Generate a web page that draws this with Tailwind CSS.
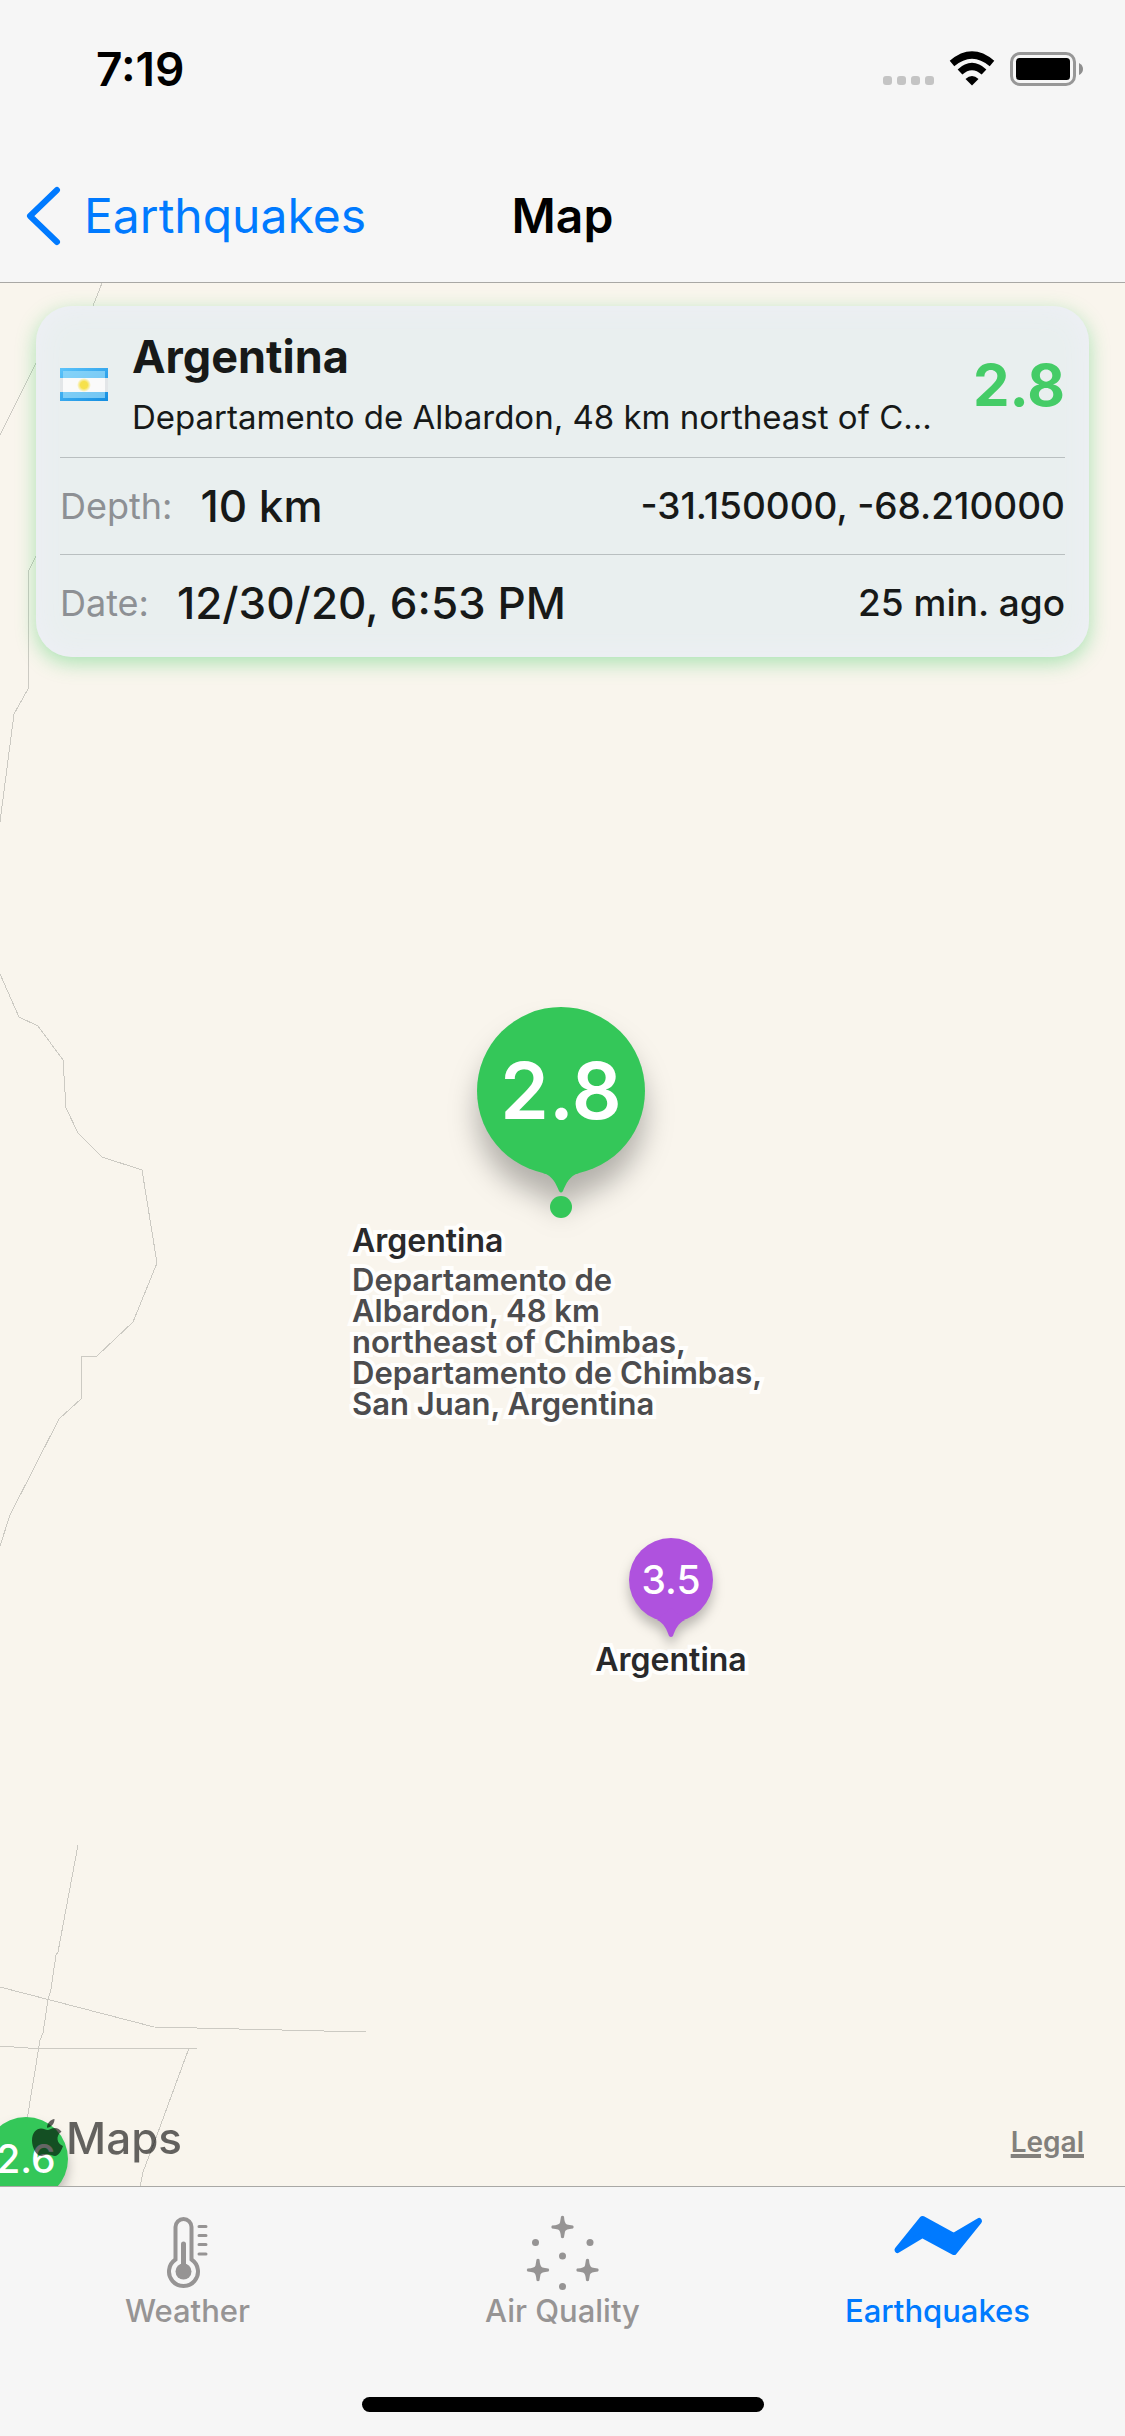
<!DOCTYPE html>
<html lang="en">
<head>
<meta charset="utf-8">
<meta name="viewport" content="width=device-width, initial-scale=1">
<title>Map</title>
<script src="https://cdn.jsdelivr.net/npm/@tailwindcss/browser@4"></script>
</head>
<body class="flex min-h-screen flex-col bg-[#f6f6f6] font-[Inter,sans-serif] text-black">

<header class="border-b border-[#a9a8a5]">
  <div class="flex h-[138px] items-center justify-between pr-[42px] pl-24">
    <time class="text-[46px] font-semibold leading-[52px]">7:19</time>
    <svg class="h-9 w-[202px]" viewBox="0 0 202 36" aria-hidden="true">
      <g fill="#c4c4c4"><rect x="2" y="25" width="9" height="9" rx="3"/><rect x="16" y="25" width="9" height="9" rx="3"/><rect x="30" y="25" width="9" height="9" rx="3"/><rect x="44" y="25" width="9" height="9" rx="3"/></g>
      <g fill="none" stroke="#000" stroke-width="7"><path d="M71 12.5Q91 -4.500 111 12.500"/><path d="M79 21Q91 10 103 21"/></g>
      <path d="M91 34.500L84.500 28Q91 22 97.500 28Z"/>
      <rect x="130.500" y="2.500" width="63" height="31" rx="8.500" fill="none" stroke="#979797" stroke-width="3"/>
      <rect x="135" y="7" width="54" height="22" rx="3.500"/>
      <path d="M198 12Q202 14 202 18T198 24Z" fill="#8e8e8e"/>
    </svg>
  </div>
  <div class="grid h-36 grid-cols-[1fr_auto_1fr] items-start pt-12 pl-[23px]">
    <a href="#" class="flex items-center gap-[22px] text-[48px] leading-[56px] text-[#007aff]">
      <svg class="h-[60px] w-[39px]" viewBox="0 0 39 60" fill="none" stroke="#007aff" stroke-width="6" stroke-linecap="round" stroke-linejoin="round" aria-hidden="true"><path d="M34 4L7 30L34 56"/></svg>
      Earthquakes
    </a>
    <h1 class="pr-[23px] text-[48px] font-semibold leading-[60px]">Map</h1>
  </div>
</header>

<main class="relative flex flex-1 flex-col overflow-hidden bg-[#f9f5ed]">
  <!-- province borders and roads -->
  <svg class="absolute top-0 left-0 h-[1903px] w-[400px]" viewBox="0 283 400 1903" fill="none" stroke="#cccac3" stroke-width="1" shape-rendering="crispEdges" aria-hidden="true">
    <path d="M102 283L93 306M36 363L20 395L0 435M36 556L28 572V689L14 714L0 822"/>
    <path d="M0 974L19 1017L38 1026L63 1060L66 1108L78 1133L102 1157L142 1170L157 1263L133 1322L97 1356H81V1399L59 1419L10 1515L0 1546"/>
    <path d="M78 1845L58 1952L56 1955L51 1989L48 2000L43 2033L40 2040L27 2120M0 1987L154 2027L366 2032M0 2046L28 2048H197M189 2048L157 2135L143 2172L140 2187"/>
  </svg>

  <!-- selected quake -->
  <section class="relative mx-9 mt-[23px] rounded-[36px] bg-[#e9efef] px-6 pb-1.5 text-[#171918] shadow-[0_6px_20px_rgba(52,199,89,0.4),inset_0_0_30px_#efeff7]">
    <div class="flex h-[151px] items-center pt-1.5">
      <svg class="h-[33px] w-12 shrink-0" viewBox="0 0 48 33" aria-label="Flag of Argentina">
        <defs>
          <linearGradient id="sky" x1="0" y1="0" x2="1" y2="1"><stop offset="0" stop-color="#5cc4fb"/><stop offset="1" stop-color="#138de0"/></linearGradient>
          <radialGradient id="sun"><stop offset="0.500" stop-color="#f6e14c"/><stop offset="1" stop-color="#f6e14c" stop-opacity="0"/></radialGradient>
        </defs>
        <rect width="48" height="33" fill="url(#sky)"/><rect x="3" y="3" width="42" height="27" fill="#9adcf9" opacity="0.700"/>
        <rect y="10" width="48" height="14" fill="#e3e6e8"/><rect x="3" y="10" width="42" height="14" fill="#fafafa"/>
        <circle cx="24" cy="17" r="7" fill="url(#sun)"/>
      </svg>
      <div class="ml-6 min-w-0 flex-1 pt-1">
        <h2 class="text-[45px] font-bold leading-[60px]">Argentina</h2>
        <p class="truncate text-[33px] leading-[60px]">Departamento de Albardon, 48 km northeast of C...</p>
      </div>
      <strong class="ml-8 text-[58px] font-bold leading-[60px] text-[#45cc67]">2.8</strong>
    </div>
    <dl class="text-[36px] leading-[48px]">
      <div class="flex h-[97px] items-center border-t border-[#b9bfc0]">
        <dt class="mr-7 text-[#8d9094]">Depth:</dt>
        <dd class="flex-1 text-[44px] font-medium">10 km</dd>
        <dd class="text-[37px] font-medium">-31.150000, -68.210000</dd>
      </div>
      <div class="flex h-[97px] items-center border-t border-[#b9bfc0]">
        <dt class="mr-7 text-[#8d9094]">Date:</dt>
        <dd class="flex-1 text-[44px] font-medium">12/30/20, 6:53 PM</dd>
        <dd class="text-[37px] font-medium">25 min. ago</dd>
      </div>
    </dl>
  </section>

  <!-- map pins -->
  <button class="absolute top-[724px] left-[477px] h-[202px] w-[168px] text-[78px] font-semibold leading-[168px] text-white">
    <svg class="absolute inset-0 overflow-visible" width="168" height="202" viewBox="0 0 168 202" fill="#34c759" aria-hidden="true">
      <g class="drop-shadow-[0_22px_14px_rgba(0,0,0,0.28)]"><circle cx="84" cy="84" r="84"/><path d="M66 166C76 169 79 177 82 184Q84 187 86 184C89 177 92 169 102 166L84 150Z"/></g>
      <circle cx="84" cy="200" r="11"/>
    </svg>
    <span class="absolute inset-x-0 top-0">2.8</span>
  </button>
  <div class="absolute top-[939px] left-[352px] w-[440px] text-[32px] font-semibold leading-[38px] text-[#29292b] [-webkit-text-stroke:8px_#fffefc] [paint-order:stroke_fill]">
    <h3>Argentina</h3>
    <p class="mt-1 text-[31px] leading-[31px] text-[#4c4c4e]">Departamento de<br>Albardon, 48 km<br>northeast of Chimbas,<br>Departamento de Chimbas,<br>San Juan, Argentina</p>
  </div>

  <button class="absolute top-[1255px] left-[571px] flex w-[200px] flex-col items-center">
    <span class="relative h-[102px] w-[84px] text-[39px] font-medium leading-[84px] text-white">
      <svg class="absolute inset-0 overflow-visible drop-shadow-[0_8px_6px_rgba(0,0,0,0.25)]" width="84" height="102" viewBox="0 0 84 102" fill="#af52de" aria-hidden="true"><circle cx="42" cy="42" r="42"/><path d="M28 82C35 85 38 92 40 98Q42 100 44 98C46 92 49 85 56 82L42 70Z"/></svg>
      <span class="absolute inset-x-0 top-0">3.5</span>
    </span>
    <span class="text-[32px] font-semibold leading-[40px] text-[#29292b] [-webkit-text-stroke:8px_#fffefc] [paint-order:stroke_fill]">Argentina</span>
  </button>

  <button class="absolute bottom-[-33px] -left-4 h-[102px] w-[84px] text-[39px] font-medium leading-[84px] text-white">
    <svg class="absolute inset-0 overflow-visible drop-shadow-[0_8px_6px_rgba(0,0,0,0.25)]" width="84" height="102" viewBox="0 0 84 102" fill="#34c759" aria-hidden="true"><circle cx="42" cy="42" r="42"/><path d="M28 82C35 85 38 92 40 98Q42 100 44 98C46 92 49 85 56 82L42 70Z"/></svg>
    <span class="absolute inset-x-0 top-0">2.6</span>
  </button>

  <div class="relative mt-auto flex items-center justify-between pr-[41px] pb-5 pl-8">
    <div class="flex items-center gap-[3px] text-[44px] font-medium leading-[56px] opacity-60">
      <svg class="h-[38px] w-[31px]" viewBox="0 0 31 38" aria-hidden="true"><path d="M22.500 0C22.700 4.500 19 8.800 15 8.700C14.700 4.500 18.500 .5 22.500 0ZM15.500 11C17.500 11 19.500 9 23 9C25.500 9 28 10.500 29.500 12.700C23.500 16.300 24.500 24.500 31 27C29.500 31.500 26.500 37 23 37C20.500 37 19.300 35.500 16 35.500C12.800 35.500 11.500 37 9 37C4.500 37 0 28.500 0 21.500C0 13.500 4.500 9.500 9 9.500C12 9.500 13.800 11 15.500 11Z"/></svg>
      Maps
    </div>
    <a href="#" class="pt-2 text-[28px] font-semibold leading-8 text-[#82807c] underline decoration-4 underline-offset-2">Legal</a>
  </div>
</main>

<footer class="border-t border-[#a9a8a5]">
  <nav class="grid grid-cols-3 pt-7 text-center text-[31px] font-medium leading-9 text-[#969494]">
    <a href="#" class="flex flex-col items-center gap-0.5">
      <svg class="h-[76px] w-[74px]" viewBox="150 2215 74 76" fill="none" stroke="#969494" stroke-width="4" stroke-linecap="round" aria-hidden="true">
        <path d="M174.500 2259.500V2227A8 8 0 0 1 190.500 2227V2259.500A14.500 14.500 0 1 1 174.500 2259.500Z"/><path d="M182.500 2244V2272" stroke-width="5"/><circle cx="182.500" cy="2271.500" r="8" fill="#969494" stroke="none"/><path d="M198 2226.500H205M198 2235.500H205M198 2244.500H205M198 2254H205" stroke-width="3"/>
      </svg>
      Weather
    </a>
    <a href="#" class="flex flex-col items-center gap-0.5">
      <svg class="h-[76px] w-[74px]" viewBox="525 2215 74 76" fill="#969494" aria-hidden="true">
        <defs><path id="spark" d="M-1.500 -10.500Q0 -12 1.500 -10.500Q2 -3 4.500 -2.500Q10 -1.500 10.500 -1.500Q12 0 10.500 1.500Q3 2 2.500 4.500Q1.500 10 1.500 10.500Q0 12 -1.500 10.500Q-2 3 -4.500 2.500Q-10 1.500 -10.500 1.500Q-12 0 -10.500 -1.500Q-3 -2 -2.500 -4.500Z"/></defs>
        <use href="#spark" x="561.500" y="2227"/><use href="#spark" x="537" y="2270"/><use href="#spark" x="586.500" y="2270"/>
        <circle cx="534.500" cy="2242.500" r="3.500"/><circle cx="589" cy="2242.500" r="3.500"/><circle cx="561.500" cy="2256" r="3.500"/><circle cx="561.500" cy="2286.500" r="3.500"/>
      </svg>
      Air Quality
    </a>
    <a href="#" aria-current="page" class="flex flex-col items-center gap-0.5 text-[#007aff]">
      <svg class="h-[76px] w-[90px]" viewBox="892 2215 90 76" fill="#007aff" stroke="#007aff" stroke-width="6" stroke-linejoin="round" aria-hidden="true"><path d="M896.500 2250L921.500 2219L952.500 2236L978 2221L953 2252L921.500 2235Z"/></svg>
      Earthquakes
    </a>
  </nav>
  <div class="mx-auto mt-[68px] mb-6 h-[15px] w-[402px] rounded-full bg-black"></div>
</footer>
</body>
</html>
